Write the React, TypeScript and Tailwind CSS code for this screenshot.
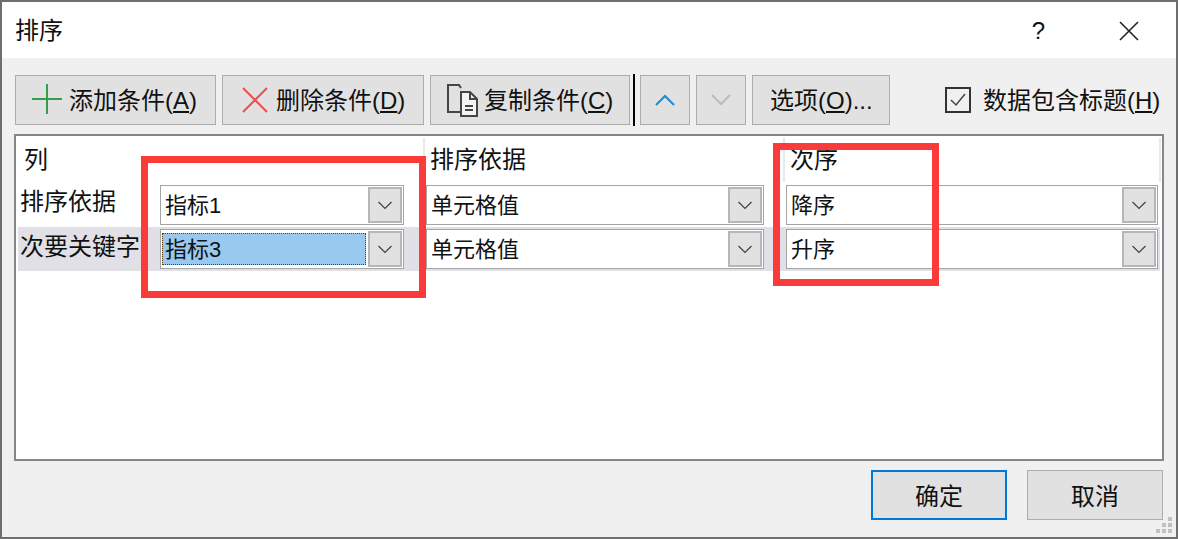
import type { ReactNode } from 'react'

const font = "font-['Liberation_Sans','Noto_Sans_CJK_SC',sans-serif]"

function ToolButton({ width, children }: { width: string; children: ReactNode }) {
  return (
    <div className={`${width} flex h-[50px] shrink-0 items-center border border-[#adadad] bg-[#e1e1e1]`}>
      {children}
    </div>
  )
}

function Chevron() {
  return (
    <svg width="14" height="9" viewBox="0 0 14 9" fill="none">
      <path d="M.5 1 7 7.5 13.500 1" stroke="#404040" strokeWidth="1.2" />
    </svg>
  )
}

function Combo({ width, label, selected }: { width: string; label: string; selected?: boolean }) {
  return (
    <div className={`${width} flex h-10 shrink-0 items-center border border-[#a4a4a4] bg-white p-px text-[22px] leading-none`}>
      <div className="flex h-full min-w-0 flex-1 items-center pr-[2px]">
        {selected ? (
          <div className="flex h-[32px] flex-1 items-center border border-dotted border-[#5a3a10] bg-[#99c9ee] pl-[2px] pt-[2px]">
            {label}
          </div>
        ) : (
          <div className="pl-[3px] pt-[2px]">{label}</div>
        )}
      </div>
      <div className="flex h-full w-[34px] shrink-0 items-center justify-center border-2 border-[#b6b6b6] bg-[#e1e1e1]">
        <Chevron />
      </div>
    </div>
  )
}

export default function App() {
  return (
    <div className={`${font} relative flex h-[539px] w-[1178px] flex-col overflow-hidden border-2 border-[#6e6e6e] bg-[#f0f0f0] text-[#111]`}>
      <div className="flex h-[56px] shrink-0 items-center justify-between bg-white pl-[13px] pr-[36px] pt-[2px]">
        <span className="text-[24px] leading-none">排序</span>
        <div className="flex items-center gap-[73px]">
          <span className="text-[24px] leading-none">?</span>
          <svg width="22" height="22" viewBox="0 0 22 22" fill="none">
            <path d="M2 2l18 18M20 2 2 20" stroke="#222" strokeWidth="1.6" />
          </svg>
        </div>
      </div>

      <div className="mt-[17px] flex h-[50px] shrink-0 items-center pl-[13px] text-[24px] leading-none">
        <ToolButton width="w-[201px]">
          <svg className="ml-[16px] -translate-y-px" width="30" height="30" viewBox="0 0 30 30" fill="none">
            <path d="M0 15h30M15 0v30" stroke="#339d4c" strokeWidth="2" />
          </svg>
          <span className="ml-[7px] pt-[2px]">添加条件(<span className="underline underline-offset-2">A</span>)</span>
        </ToolButton>
        <div className="w-[6px]" />
        <ToolButton width="w-[202px]">
          <svg className="ml-[19px]" width="26" height="26" viewBox="0 0 26 26" fill="none">
            <path d="M1 1l24 24M25 1 1 25" stroke="#e9504f" strokeWidth="2" />
          </svg>
          <span className="ml-[8px] pt-[2px]">删除条件(<span className="underline underline-offset-2">D</span>)</span>
        </ToolButton>
        <div className="w-[6px]" />
        <ToolButton width="w-[200px]">
          <svg className="ml-[16px]" width="32" height="33" viewBox="0 0 32 33" fill="none" stroke="#454545" strokeWidth="2">
            <path d="M13 28H1V1h11l2 3" />
            <path d="M14 8h9l7 7v17H14z" fill="#f4f4f4" />
            <path d="M23 8v7h7M18 22h8M18 26h8" />
          </svg>
          <span className="ml-[5px] pt-[2px]">复制条件(<span className="underline underline-offset-2">C</span>)</span>
        </ToolButton>
        <div className="ml-[3px] mr-[5px] h-[52px] w-[2px] bg-black" />
        <ToolButton width="w-[50px]">
          <div className="flex w-full justify-center">
            <svg width="20" height="12" viewBox="0 0 20 12" fill="none">
              <path d="M1 11l9-9 9 9" stroke="#1f8fd6" strokeWidth="2.2" />
            </svg>
          </div>
        </ToolButton>
        <div className="w-[6px]" />
        <ToolButton width="w-[50px]">
          <div className="flex w-full justify-center">
            <svg width="20" height="12" viewBox="0 0 20 12" fill="none">
              <path d="M1 1l9 9 9-9" stroke="#bdbdbd" strokeWidth="2.2" />
            </svg>
          </div>
        </ToolButton>
        <div className="w-[6px]" />
        <ToolButton width="w-[138px]">
          <span className="ml-[17px] pt-[2px]">选项(<span className="underline underline-offset-2">O</span>)...</span>
        </ToolButton>
        <div className="ml-[55px] flex h-[26px] w-[26px] shrink-0 items-center justify-center border-2 border-[#333] bg-[#f0f0f0]">
          <svg width="18" height="16" viewBox="0 0 18 16" fill="none">
            <path d="M2 8l5 5L16 2" stroke="#444" strokeWidth="1.5" />
          </svg>
        </div>
        <span className="ml-[12px] whitespace-nowrap pt-[2px]">数据包含标题(<span className="underline underline-offset-2">H</span>)</span>
      </div>

      <div className="mx-[12px] mt-[9px] h-[327px] shrink-0 border-2 border-[#82878c] bg-white pl-[2px] pt-[2px] text-[24px] leading-none">
        <div className="flex h-[44px] items-center">
          <div className="w-[405px] pl-[6px]">列</div>
          <div className="h-full w-[2px] bg-[#e8e8e8]" />
          <div className="w-[358px] pl-[5px]">排序依据</div>
          <div className="h-full w-[2px] bg-[#e8e8e8]" />
          <div className="w-[374px] pl-[5px]">次序</div>
          <div className="h-full w-[2px] bg-[#e8e8e8]" />
        </div>
        <div className="mt-[1px] flex h-[44px] items-center pl-[2px]">
          <div className="w-[140px] -translate-y-[3px] whitespace-nowrap">排序依据</div>
          <Combo width="w-[244px]" label="指标1" />
          <div className="w-[22px]" />
          <Combo width="w-[338px]" label="单元格值" />
          <div className="w-[22px]" />
          <Combo width="w-[372px]" label="降序" />
        </div>
        <div className="flex h-[44px] w-[1142px] items-center bg-[#e0e0e6] pl-[2px]">
          <div className="w-[140px] -translate-y-[2px] whitespace-nowrap">次要关键字</div>
          <Combo width="w-[244px]" label="指标3" selected />
          <div className="w-[22px]" />
          <Combo width="w-[338px]" label="单元格值" />
          <div className="w-[22px]" />
          <Combo width="w-[372px]" label="升序" />
        </div>
      </div>

      <div className="mt-[9px] flex justify-end gap-[20px] pr-[13px] text-[24px] leading-none">
        <div className="flex h-[50px] w-[136px] items-center justify-center border-2 border-[#0078d7] bg-[#e1e1e1] pt-[3px]">确定</div>
        <div className="flex h-[50px] w-[136px] items-center justify-center border border-[#adadad] bg-[#e1e1e1] pt-[3px]">取消</div>
      </div>

      {/* red annotation boxes sit on top of the dialog */}
      <div className="absolute left-[139px] top-[154px] h-[142px] w-[285px] border-[7px] border-[#fb3a3a]" />
      <div className="absolute left-[771px] top-[141px] h-[143px] w-[166px] border-[7px] border-[#fb3a3a]" />

      <svg className="absolute bottom-[4px] right-[4px]" width="16" height="16" viewBox="0 0 16 16" fill="#c0c0c0">
        <path d="M12 0h4v4h-4zM6 6h4v4H6zM12 6h4v4h-4zM0 12h4v4H0zM6 12h4v4H6zM12 12h4v4h-4z" />
      </svg>
    </div>
  )
}
